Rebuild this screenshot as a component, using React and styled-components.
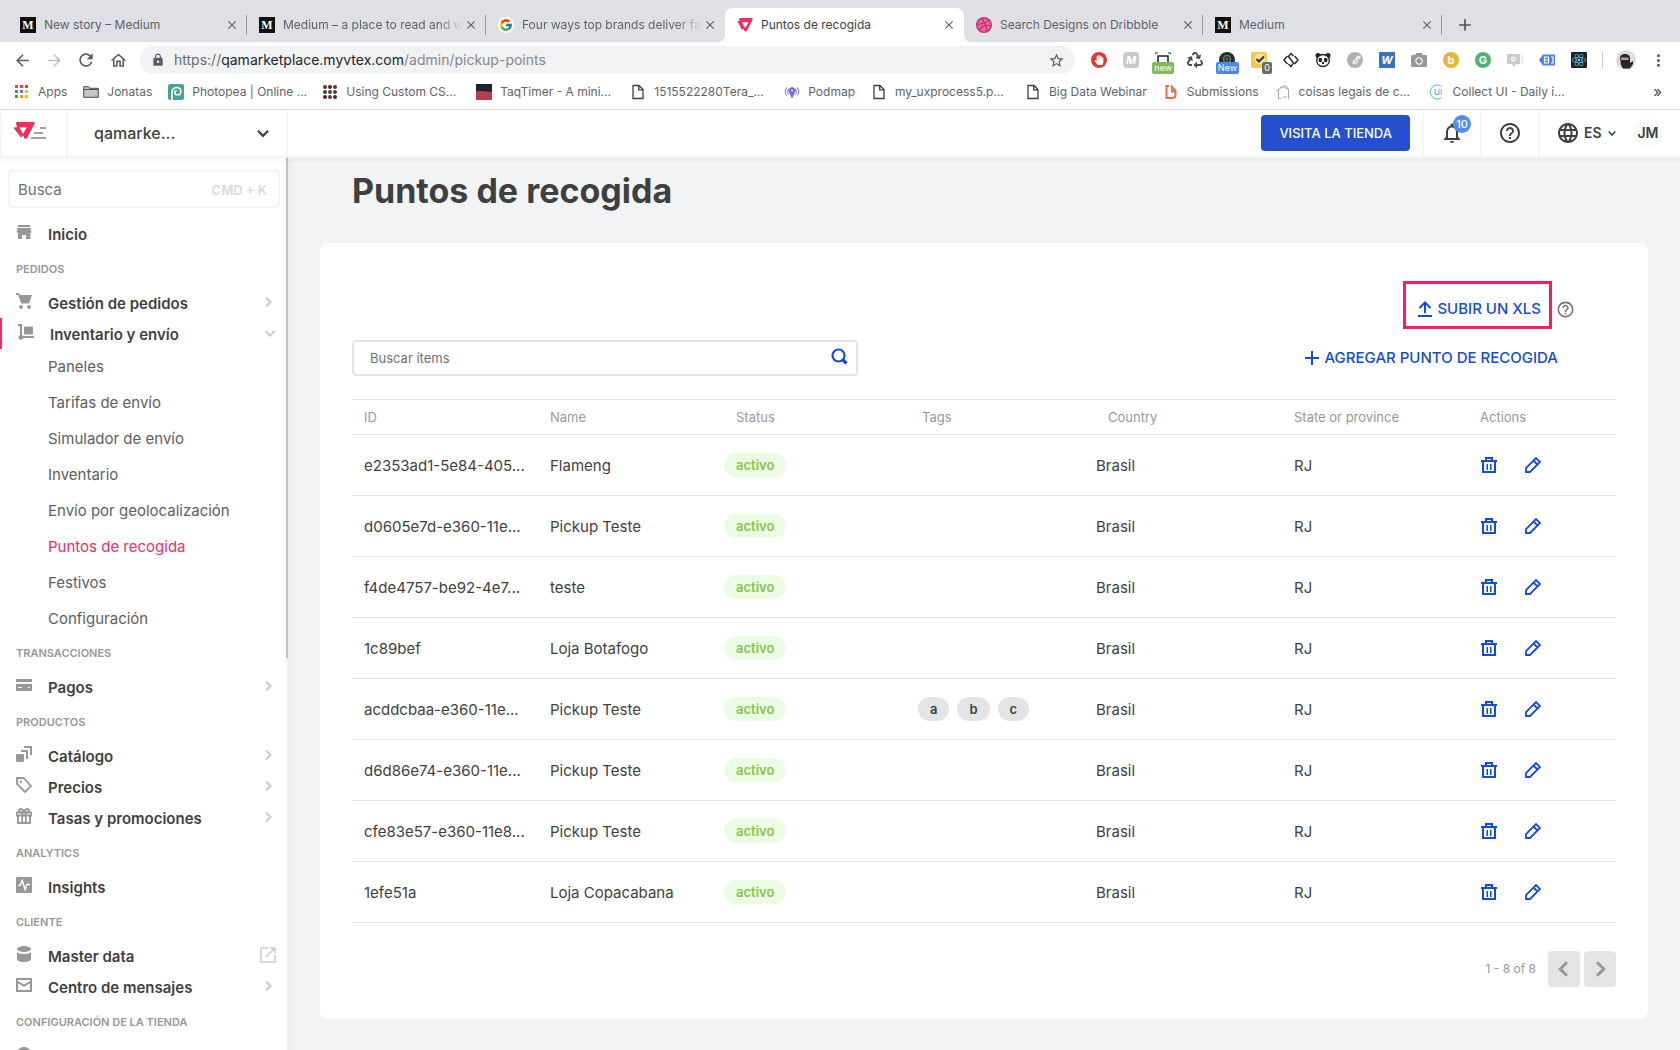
import React from "react";
import styled, { createGlobalStyle, css } from "styled-components";
import {
  MdArrowBack,
  MdArrowForward,
  MdRefresh,
  MdOutlineHome,
  MdLock,
  MdStarBorder,
  MdMoreVert,
  MdNotificationsNone,
  MdHelpOutline,
  MdLanguage,
  MdClose,
  MdAdd,
} from "react-icons/md";
import { FaRecycle, FaHandPaper, FaCamera, FaReact } from "react-icons/fa";
import { FcGoogle } from "react-icons/fc";
import { FaDribbble } from "react-icons/fa6";

const ink = "#3f3f40";
const muted = "#979899";
const blue = "#134cd8";
const pink = "#e9315f";
const line = "#e3e4e6";
const frame = "#f2f4f5";

const GlobalStyle = createGlobalStyle`
  * { box-sizing: border-box; }
  body {
    margin: 0;
    color: ${ink};
    font-family: Inter, "Liberation Sans", sans-serif;
    font-size: 15px;
    line-height: 20px;
  }
  button, input, select { font: inherit; color: inherit; }
  button { padding: 0; border: 0; background: none; cursor: pointer; }
  a { color: inherit; text-decoration: none; }
  svg { display: block; flex: none; }
`;

/* ---------- Browser window ---------- */

const Screen = styled.div`
  display: flex;
  flex-direction: column;
  height: 100vh;
  overflow: hidden;
  background: #fff;
`;

const TabStrip = styled.div`
  display: flex;
  align-items: center;
  flex: none;
  padding: 8px 8px 0;
  background: #dfe0e5;
`;

const Tab = styled.div`
  display: flex;
  align-items: center;
  flex: 0 1 239px;
  min-width: 0;
  height: 34px;
  color: #5f6368;
  font-size: 12px;
  ${(p) =>
    p.$active &&
    css`
      position: relative;
      background: #fff;
      color: #3c4043;
      border-radius: 8px 8px 0 0;
      &::before,
      &::after {
        content: "";
        position: absolute;
        bottom: 0;
        width: 8px;
        height: 8px;
      }
      &::before {
        right: 100%;
        background: radial-gradient(circle at 0 0, transparent 8px, #fff 8px);
      }
      &::after {
        left: 100%;
        background: radial-gradient(circle at 100% 0, transparent 8px, #fff 8px);
      }
    `}
`;

const TabLink = styled.a`
  display: flex;
  align-items: center;
  flex: 1;
  gap: 8px;
  min-width: 0;
  padding-left: 12px;
`;

const TabTitle = styled.span`
  flex: 1;
  overflow: hidden;
  white-space: nowrap;
  ${(p) =>
    p.$fade &&
    css`
      mask-image: linear-gradient(to right, #000 86%, transparent);
    `}
`;

const TabClose = styled.button`
  display: grid;
  place-items: center;
  width: 16px;
  height: 16px;
  margin-right: 6px;
  color: #5f6368;
`;

const TabDivider = styled.span`
  width: 1px;
  height: 20px;
  background: ${(p) => (p.$visible ? "#96999e" : "transparent")};
`;

const NewTab = styled.button`
  display: grid;
  place-items: center;
  width: 28px;
  height: 28px;
  margin-left: 9px;
  color: #505357;
`;

const SerifMark = styled.span`
  display: grid;
  place-items: center;
  flex: none;
  width: 16px;
  height: 16px;
  background: #12100e;
  color: #fff;
  font: 700 12px/16px "Liberation Serif", serif;
`;

const Toolbar = styled.div`
  display: flex;
  align-items: center;
  flex: none;
  padding: 4px 5px 4px 6px;
`;

const ToolButton = styled.button`
  display: grid;
  place-items: center;
  flex: none;
  width: ${(p) => p.$width || 32}px;
  height: 28px;
  color: ${(p) => (p.$dim ? "#bcbec1" : "#5a5d61")};
`;

const Omnibox = styled.label`
  display: flex;
  align-items: center;
  flex: 1;
  min-width: 0;
  height: 28px;
  margin: 0 8px 0 6px;
  padding: 0 10px 0 11px;
  border-radius: 14px;
  background: #f1f2f4;
  color: #5a5d61;
  font-size: 14px;
`;

const Address = styled.span`
  flex: 1;
  padding-left: 9px;
  color: #85888c;
  overflow: hidden;
  white-space: nowrap;
`;

const Scheme = styled.span`
  color: #696c70;
`;

const Host = styled.span`
  color: #25272a;
`;

const ExtIcon = styled.span`
  display: grid;
  place-items: center;
  flex: none;
  position: relative;
  width: 16px;
  height: 16px;
  border-radius: ${(p) => (p.$round ? 8 : p.$corner || 0)}px;
  background: ${(p) => p.$bg || "none"};
  color: ${(p) => p.$fg || "#fff"};
  font: ${(p) => (p.$italic ? "italic " : "")}700 11px/16px Inter, sans-serif;
`;

const ExtBadge = styled.span`
  position: absolute;
  top: 10px;
  right: ${(p) => p.$right}px;
  padding: 0 2px;
  border-radius: 2px;
  background: ${(p) => p.$bg};
  color: #fff;
  font: 400 9px/12px Inter, sans-serif;
`;

const ToolDivider = styled.span`
  width: 1px;
  height: 16px;
  margin: 0 8px 0 7px;
  background: #c8cacd;
`;

const Bookmarks = styled.nav`
  display: flex;
  align-items: center;
  flex: none;
  height: 32px;
  padding: 0 18px 4px 14px;
  border-bottom: 1px solid #d5d7da;
  color: #5f6368;
  font-size: 12px;
`;

const Bookmark = styled.a`
  display: flex;
  align-items: center;
  gap: 8px;
  flex: 0 0 ${(p) => (p.$long ? "154px" : "auto")};
  padding-right: ${(p) => (p.$long ? 0 : 16)}px;
  white-space: nowrap;
`;

const BookmarkIcon = styled.span`
  display: grid;
  place-items: center;
  width: 16px;
  height: 16px;
`;

const More = styled.button`
  margin-left: auto;
  font-size: 15px;
  color: #45484c;
`;

/* ---------- Admin top bar ---------- */

const TopBar = styled.header`
  display: flex;
  flex: none;
  position: relative;
  z-index: 1;
  height: 48px;
  border-bottom: 2px solid ${frame};
  border-left: 2px solid ${frame};
  box-shadow: 0 4px 0 rgba(0, 0, 0, 0.02);
`;

const LogoLink = styled.a`
  padding: 11px 0 0 12px;
  width: 66px;
  border-right: 2px solid ${frame};
`;

const StorePicker = styled.label`
  display: flex;
  align-items: center;
  width: 220px;
  padding: 0 14px 0 26px;
  border-right: 2px solid ${frame};
  font-size: 16px;
  font-weight: 500;
`;

const PlainSelect = styled.select`
  flex: 1;
  padding: 0;
  border: 0;
  background: none;
  appearance: none;
`;

const TopActions = styled.div`
  display: flex;
  align-items: center;
  margin-left: auto;
`;

const VisitButton = styled.a`
  margin-right: 12px;
  padding: 8px 18px;
  border-radius: 4px;
  background: #2450cf;
  color: #fff;
  font-size: 13px;
  font-weight: 500;
`;

const TopCell = styled.button`
  display: grid;
  place-items: center;
  position: relative;
  width: 58px;
  height: 46px;
  border-left: 2px solid ${frame};
`;

const CountBadge = styled.span`
  position: absolute;
  top: 5px;
  left: 29px;
  width: 18px;
  height: 18px;
  border-radius: 9px;
  background: #4f8df2;
  color: #fff;
  font-size: 11px;
  font-weight: 500;
  line-height: 18px;
`;

const LocaleCell = styled.label`
  display: flex;
  align-items: center;
  gap: 4px;
  height: 46px;
  padding-left: 16px;
  border-left: 2px solid ${frame};
  font-size: 14px;
  font-weight: 600;
`;

const Avatar = styled.button`
  width: 28px;
  height: 28px;
  margin: 0 18px 0 16px;
  border-radius: 14px;
  background: #f7f9fa;
  font-size: 14px;
  font-weight: 600;
`;

/* ---------- Sidebar ---------- */

const Body = styled.div`
  display: flex;
  flex: 1;
  min-height: 0;
`;

const Sidebar = styled.aside`
  display: flex;
  flex: none;
  position: relative;
  width: 288px;
  box-shadow: 4px 0 0 rgba(0, 0, 0, 0.02);
`;

const SideNav = styled.nav`
  flex: 1;
  padding-top: 12px;
  overflow: hidden;
`;

const ScrollTrack = styled.div`
  width: 2px;
  background: ${frame};
`;

const ScrollThumb = styled.div`
  height: 56%;
  background: #bfc0c2;
`;

const SideSearch = styled.label`
  display: flex;
  align-items: center;
  height: 38px;
  margin: 0 6px 10px 8px;
  padding: 2px 11px 0 8px;
  border: 2px solid ${frame};
  border-radius: 4px;
`;

const SideInput = styled.input`
  flex: 1;
  min-width: 0;
  padding: 0;
  border: 0;
  outline: 0;
  &::placeholder {
    color: #727273;
    opacity: 1;
  }
`;

const Shortcut = styled.span`
  color: #dcdddf;
  font-size: 13px;
  font-weight: 700;
`;

const SideHeading = styled.h2`
  height: 38px;
  margin: 0;
  padding: 10px 16px 8px;
  color: ${muted};
  font-size: 11px;
  font-weight: 600;
`;

const SideItem = styled.a`
  display: flex;
  align-items: center;
  gap: 16px;
  height: 31px;
  padding: 0 ${(p) => (p.$current ? 8 : 10)}px 0 16px;
  border-left: ${(p) => (p.$current ? `2px solid ${pink}` : "0")};
  font-weight: 600;
  color: ${ink};
  & > svg {
    margin-bottom: 4px;
    color: ${muted};
  }
`;

const SideLabel = styled.span`
  flex: 1;
  padding-top: 2px;
`;

const SideTail = styled.span`
  margin-bottom: 2px;
  color: #cacbcc;
`;

const SubList = styled.ul`
  margin: 0 0 -4px;
  padding: 0;
  list-style: none;
`;

const SubLink = styled.a`
  display: block;
  padding: 8px 16px 8px 48px;
  color: ${(p) => (p.$current ? pink : "#5e5e5f")};
`;

/* ---------- Page ---------- */

const Page = styled.main`
  flex: 1;
  min-width: 0;
  padding: 13px 32px 31px;
  overflow: hidden;
  background: #f2f3f5;
`;

const Title = styled.h1`
  margin: 0 0 32px;
  padding-left: 32px;
  font-size: 34px;
  line-height: 40px;
  font-weight: 700;
`;

const Card = styled.section`
  padding: 38px 32px 32px;
  border-radius: 8px;
  background: #fff;
`;

const UploadRow = styled.div`
  display: flex;
  justify-content: flex-end;
  gap: 4px;
  margin-bottom: 11px;
  padding-right: 41px;
  color: #727273;
  & > svg {
    margin-top: 19px;
  }
`;

const ActionButton = styled.button`
  display: flex;
  align-items: center;
  gap: 5px;
  color: ${blue};
  font-weight: 500;
`;

const Highlight = styled.div`
  display: flex;
  height: 48px;
  padding: 7px 8px 0 12px;
  border: 3px solid #fa1a66;
`;

const FilterRow = styled.div`
  display: flex;
  justify-content: space-between;
  margin-bottom: 23px;
  padding-right: 58px;
`;

const SearchBox = styled.label`
  display: flex;
  align-items: center;
  flex: 0 1 506px;
  height: 36px;
  padding: 0 8px 0 16px;
  border: 2px solid ${line};
  border-radius: 4px;
  & > svg {
    margin-bottom: 4px;
  }
`;

const SearchInput = styled.input`
  flex: 1;
  min-width: 0;
  padding: 0;
  border: 0;
  outline: 0;
  font-size: 13px;
  &::placeholder {
    color: #727273;
    opacity: 1;
  }
`;

const Table = styled.table`
  width: 100%;
  table-layout: fixed;
  border-collapse: separate;
  border-spacing: 0;
`;

const HeadCell = styled.th`
  width: ${(p) => (p.$last ? "auto" : "186px")};
  height: 36px;
  padding: 0 12px;
  border-top: 1px solid ${line};
  border-bottom: 1px solid ${line};
  color: ${muted};
  font-size: 13px;
  font-weight: 400;
  text-align: left;
`;

const Cell = styled.td`
  height: 61px;
  padding: ${(p) => (p.$badge ? 0 : 2)}px ${(p) => (p.$flush ? 0 : 12)}px 0;
  border-bottom: 1px solid ${line};
  overflow: hidden;
  white-space: nowrap;
`;

const Status = styled.span`
  display: inline-block;
  padding: 2px 12px;
  border-radius: 12px;
  background: #eafce3;
  color: #8bc34a;
  font-size: 13px;
  font-weight: 600;
  vertical-align: middle;
`;

const TagList = styled.div`
  display: flex;
  gap: 8px;
  padding-left: 8px;
`;

const Tag = styled.span`
  padding: 2px 12px;
  border-radius: 12px;
  background: ${line};
  font-size: 13px;
  font-weight: 600;
`;

const RowActions = styled.div`
  display: flex;
  gap: 28px;
  padding-left: 1px;
  color: ${blue};
`;

const IconButton = styled.button`
  width: 16px;
  height: 16px;
`;

const Pager = styled.div`
  display: flex;
  align-items: center;
  justify-content: flex-end;
  gap: 4px;
  margin-top: 28px;
`;

const PagerText = styled.span`
  margin-right: 8px;
  color: ${muted};
  font-size: 12px;
`;

const PagerButton = styled.button`
  display: grid;
  place-items: center;
  width: 32px;
  height: 36px;
  border-radius: 4px;
  background: ${line};
  color: ${muted};
`;

/* ---------- Drawings ---------- */

const Svg = ({ w = 16, h = 16, box, ...rest }) => (
  <svg width={w} height={h} viewBox={box || `0 0 ${w} ${h}`} fill="none" aria-hidden="true" {...rest} />
);

const Chevron = ({ dir = "right", size = 16, weight = 2 }) => {
  const d = {
    right: "M6 3.500l4.500 4.500L6 12.500",
    left: "M10 3.500L5.500 8l4.500 4.500",
    down: "M3.500 6L8 10.500 12.500 6",
  }[dir];
  return (
    <Svg w={size} h={size} box="0 0 16 16" stroke="currentColor" strokeWidth={weight}>
      <path d={d} />
    </Svg>
  );
};

const VtexMark = () => (
  <Svg w={16} h={16} fill={pink}>
    <path
      fillRule="evenodd"
      d="M3.200 1h11.300c1 0 1.500 1 1 1.900l-5.800 11c-.5.900-1.700.900-2.200 0L6.200 11.400l-.6 1c-.2.400-.7.400-.9 0L1 5.300c-.3-.6 0-1.200.6-1.200h1.100L2.200 2.900C1.800 2 2.300 1 3.200 1zM5 5.200l3.200 6 3.200-6z"
    />
  </Svg>
);

const BrandLogo = () => (
  <Svg w={34} h={20}>
    <path
      fill={pink}
      fillRule="evenodd"
      d="M3.500 1h16c1 0 1.500 1 1 1.900l-7.600 14.300c-.6 1-2 1-2.500 0L8.800 14.300l-1 1.800c-.3.500-.9.500-1.200 0L.2 7.800C-.2 7 .2 6.200 1 6.200h2.200L2.100 3C1.700 2 2.300 1 3.500 1zM5.400 6.400L9 13l3.600-6.600z"
    />
    <path stroke="#9fa1a3" strokeWidth="2" d="M26 7h6M23 12h4M17 17h15M20 12h9" />
  </Svg>
);

const sideIcons = {
  store: <path fill="currentColor" d="M2 1h12v2H2zM1.500 4h13l1 4.500h-1V15H10v-4H6v4H2V8.500H.5z" />,
  cart: (
    <g fill="currentColor">
      <path d="M0 0h3.200l.8 2H16l-2.600 7.500c-.2.600-.7 1-1.300 1H5.200L2.200 2H0z" />
      <circle cx="5" cy="14" r="1.900" />
      <circle cx="13" cy="14" r="1.900" />
    </g>
  ),
  dolly: (
    <g fill="currentColor">
      <path d="M0 0h4v12h12v2H4V14H2V2H0z" />
      <rect x="6" y="2.500" width="9" height="8" rx=".8" />
      <circle cx="3" cy="13.300" r="2.500" />
    </g>
  ),
  card: (
    <path
      fill="currentColor"
      fillRule="evenodd"
      d="M1 2h14c.6 0 1 .4 1 1v2H0V3c0-.6.400-1 1-1zM0 7h16v6c0 .6-.4 1-1 1H1c-.6 0-1-.4-1-1zm2 3v1h4v-1zm10 0v1h2v-1z"
    />
  ),
  catalog: (
    <g>
      <rect y="8" width="8" height="8" rx="1" fill="currentColor" />
      <path stroke="currentColor" strokeWidth="2" d="M5 5h6v8M8 1h7v8" />
    </g>
  ),
  tag: (
    <g>
      <path stroke="currentColor" strokeWidth="1.800" d="M1 1h6.500L15 9l-6 6-8-8z" />
      <circle cx="4.800" cy="4.800" r="1.200" fill="currentColor" />
    </g>
  ),
  gift: (
    <path
      stroke="currentColor"
      strokeWidth="1.800"
      d="M1 4.500h14v3H1zM2 7.500V15h12V7.500M6.200 4.500V15M9.800 4.500V15M8 4C7 .5 3 0 3 2.500 3 4 5 4.300 8 4.300S13 4 13 2.500C13 0 9 .500 8 4z"
    />
  ),
  pulse: (
    <g>
      <rect width="16" height="16" rx="1" fill="currentColor" />
      <path stroke="#fff" strokeWidth="1.500" d="M2 8.500h2l2.200-5 3 9L11 7.500h3" />
    </g>
  ),
  database: (
    <g fill="currentColor">
      <ellipse cx="8" cy="3" rx="7" ry="3" />
      <path d="M1 6.300C3 8.400 13 8.400 15 6.300V13c0 1.700-3 3-7 3s-7-1.300-7-3z" />
    </g>
  ),
  mail: <path stroke="currentColor" strokeWidth="2" d="M1 2h14v12H1zM2 5l6 3.800L14 5" />,
  gear: <path fill="currentColor" d="M6.500 1h3L14 3.500l2 3v5l-2 4H2l-2-4v-5l2-3z" />,
};

const SideIcon = ({ name }) => <Svg>{sideIcons[name]}</Svg>;

const External = () => (
  <Svg stroke="currentColor" strokeWidth="1.500">
    <path d="M8 1H1v14h14V8M10 1h5v5M14.500 1.500l-8.500 8.500" />
  </Svg>
);

const Trash = () => (
  <Svg stroke="currentColor" strokeWidth="2">
    <path d="M0 4h16M5 4V1h6v3M2 4v11h12V4" />
    <path strokeWidth="1.500" d="M6.250 7v6M9.750 7v6" />
  </Svg>
);

const Pencil = () => (
  <Svg stroke="currentColor" strokeWidth="1.800">
    <path d="M1 15v-4L11 1l4 4L5 15zM8.500 3.500l4 4" />
  </Svg>
);

const Magnifier = () => (
  <Svg w={17} h={17} stroke={blue}>
    <circle cx="7.500" cy="7.500" r="6" strokeWidth="2.200" />
    <path d="M11.500 11.500l4 4" strokeWidth="3.200" />
  </Svg>
);

const Upload = () => (
  <Svg w={14} h={16} stroke="currentColor" strokeWidth="2">
    <path d="M0 15h14M7 12V1.500M1.500 7L7 1.500 12.500 7" />
  </Svg>
);

const Plus = () => (
  <Svg w={14} h={14} stroke="currentColor" strokeWidth="2">
    <path d="M7 0v14M0 7h14" />
  </Svg>
);

const FileIcon = ({ color = "#3c3f43" }) => (
  <Svg stroke={color} strokeWidth="1.300">
    <path d="M3 1.500h6l4 4V14.500H3zM8.700 1.500v4.300H13" />
  </Svg>
);

const Dots = ({ colors, round }) => (
  <Svg>
    {colors.map((c, i) => (
      <rect
        key={i}
        x={1 + (i % 3) * 5}
        y={1 + Math.floor(i / 3) * 5}
        width={round ? 4 : 3}
        height={round ? 4 : 3}
        rx={round ? 2 : 0}
        fill={c}
      />
    ))}
  </Svg>
);

const bookmarkIcons = {
  apps: (
    <Dots
      colors={["#ea4335", "#ea4335", "#ea4335", "#34a853", "#4285f4", "#fbbc05", "#34a853", "#f29900", "#fbbc05"]}
    />
  ),
  folder: (
    <Svg>
      <path d="M.7 13.300V2.700h4.800l1.200 1.600h8.600v9z" fill="#c4c5c7" stroke="#4a4d51" />
      <path d="M1 5.500h14" stroke="#4a4d51" />
    </Svg>
  ),
  photopea: (
    <Svg>
      <rect width="16" height="16" rx="2" fill="#45a497" />
      <path
        d="M4 16V8.500C4 5.500 6 3.500 8.600 3.500c2.400 0 4.200 1.600 4.200 3.900 0 2-1.500 3.400-3.400 3.400-1.500 0-2.600-1-2.600-2.300 0-1.100.8-1.900 1.800-1.900"
        stroke="#fff"
        strokeWidth="1.600"
      />
    </Svg>
  ),
  custom: (
    <Dots
      round
      colors={["#4b4038", "#7d1010", "#4b4038", "#4b4038", "#4b4038", "#4b4038", "#7d1010", "#4b4038", "#7d1010"]}
    />
  ),
  timer: (
    <Svg>
      <path fill="#b53e50" d="M0 6h16v10H0z" />
      <path fill="#1d2230" d="M0 0h16v7.500C11 8.500 5 6 0 7.500z" />
    </Svg>
  ),
  file: <FileIcon />,
  podmap: (
    <Svg stroke="#7b61e8">
      <path d="M2.500 3.500c-1.700 2.500-1.700 5.500 0 8M4.500 4.500c-1 2-1 4 0 6M13.500 3.500c1.700 2.500 1.700 5.500 0 8M11.500 4.500c1 2 1 4 0 6" />
      <path fill="#7b61e8" d="M8 13.500L5.500 8a2.900 2.900 0 1 1 5 0z" />
      <circle cx="8" cy="6.500" r="1" fill="#fff" stroke="none" />
    </Svg>
  ),
  submit: (
    <Svg stroke="#ef6a45" strokeWidth="2">
      <path d="M6 2H3.500v12h6c2 0 3-1.200 3-3V7L9 3v4.500h3" />
    </Svg>
  ),
  box: (
    <Svg stroke="#a5a7aa">
      <path d="M3.500 15V5.500L8 2.500l5.500 3V15M3.500 5.500L1.500 7M5 3.500l6-2 2.500 4M3.500 14.500h3M8 13h4" />
    </Svg>
  ),
  collect: (
    <Svg>
      <path d="M12.500 2.500A7 7 0 1 0 12.500 13.500" stroke="#4db6e6" />
      <text x="5" y="11" fontSize="8" fontFamily="Inter, sans-serif" fill="#2f9fd8">
        UI
      </text>
    </Svg>
  ),
};

const tabIcons = {
  medium: <SerifMark>M</SerifMark>,
  google: (
    <ExtIcon $round $bg="#fff">
      <FcGoogle size={14} />
    </ExtIcon>
  ),
  vtex: <VtexMark />,
  dribbble: (
    <ExtIcon $round $bg="#e8659b" $fg="#b8326a">
      <FaDribbble size={16} />
    </ExtIcon>
  ),
};

/* ---------- Data ---------- */

const tabs = [
  { icon: "medium", title: "New story – Medium", divider: true },
  { icon: "medium", title: "Medium – a place to read and w", divider: true, fade: true },
  { icon: "google", title: "Four ways top brands deliver fa", fade: true },
  { icon: "vtex", title: "Puntos de recogida", active: true },
  { icon: "dribbble", title: "Search Designs on Dribbble", divider: true },
  { icon: "medium", title: "Medium", divider: true },
];

const bookmarks = [
  { icon: "apps", title: "Apps" },
  { icon: "folder", title: "Jonatas" },
  { icon: "photopea", title: "Photopea | Online ...", long: true },
  { icon: "custom", title: "Using Custom CS...", long: true },
  { icon: "timer", title: "TaqTimer - A mini...", long: true },
  { icon: "file", title: "1515522280Tera_...", long: true },
  { icon: "podmap", title: "Podmap" },
  { icon: "file", title: "my_uxprocess5.p...", long: true },
  { icon: "file", title: "Big Data Webinar" },
  { icon: "submit", title: "Submissions" },
  { icon: "box", title: "coisas legais de c...", long: true },
  { icon: "collect", title: "Collect UI - Daily i..." },
];

const extensions = [
  ["Bloqueador", <ExtIcon $round $bg="#dd3b2f"><FaHandPaper size={10} /></ExtIcon>],
  ["Notas", <ExtIcon $italic $corner={4} $bg="#c9c9c9">M</ExtIcon>],
  [
    "Captura",
    <ExtIcon>
      <Svg stroke="#222" strokeWidth="1.500">
        <path d="M3 10V4h10v6" />
        <path d="M0 3V1h3M13 1h3v2" stroke="#4a9a3a" />
      </Svg>
      <ExtBadge $bg="#7fba5c" $right={-3}>new</ExtBadge>
    </ExtIcon>,
  ],
  ["Reciclar", <FaRecycle size={16} color="#4a4d51" />],
  [
    "Cámara",
    <ExtIcon>
      <Svg>
        <circle cx="8" cy="8" r="8" fill="#26282b" />
        <circle cx="8" cy="7" r="3.500" stroke="#3f8f7a" strokeWidth="1.500" />
        <circle cx="8" cy="7" r="1.500" fill="#b8433c" />
      </Svg>
      <ExtBadge $bg="#4a86ee" $right={-4}>New</ExtBadge>
    </ExtIcon>,
  ],
  [
    "Tareas",
    <ExtIcon $corner={2} $bg="#f3c64c">
      <Svg>
        <circle cx="9" cy="7" r="5.500" fill="#f7e3a0" />
        <path d="M5.500 7l2.500 2.500 5-5" stroke="#333" strokeWidth="2" />
      </Svg>
      <ExtBadge $bg="#6b6b6b" $right={-5}>0</ExtBadge>
    </ExtIcon>,
  ],
  [
    "Sketch",
    <Svg stroke="#2b2b2b" strokeWidth="1.500">
      <path d="M4.500 4L.9 8l3.600 4M11.500 4l3.600 4-3.600 4M10.500 4L8 1.500 5.500 4.500l5 6.500L8 14.500 5.500 12" />
    </Svg>,
  ],
  [
    "Panda",
    <Svg>
      <circle cx="3" cy="3.500" r="2.500" fill="#222" />
      <circle cx="13" cy="3.500" r="2.500" fill="#222" />
      <ellipse cx="8" cy="8.500" rx="6.300" ry="6" fill="#fff" stroke="#222" strokeWidth="1.300" />
      <ellipse cx="5.300" cy="8" rx="1.800" ry="2.200" fill="#222" />
      <ellipse cx="10.700" cy="8" rx="1.800" ry="2.200" fill="#222" />
      <circle cx="8" cy="11" r="1.200" fill="#222" />
    </Svg>,
  ],
  ["Evernote", <ExtIcon $round $italic $bg="#b0b0b0">ℰ</ExtIcon>],
  ["Word", <ExtIcon $italic $bg="#3a73b8">W</ExtIcon>],
  ["Foto", <FaCamera size={16} color="#98999b" />],
  ["Bitly", <ExtIcon $round $bg="#eeb23c">b</ExtIcon>],
  ["Gramática", <ExtIcon $round $bg="#4cb277">G</ExtIcon>],
  [
    "Chat",
    <Svg>
      <path d="M15 2v10" stroke="#dadada" />
      <path d="M0 2h13v10H9l-2.500 3L5 12H0z" fill="#cbcbcb" />
      <circle cx="6.500" cy="7" r="1.800" stroke="#fff" strokeWidth="1.200" />
    </Svg>,
  ],
  [
    "Etiquetas",
    <Svg>
      <path d="M0 8l4-5.500h12v11H4z" fill="#4a7df0" />
      <path d="M5.500 5h4v6h-4zM5.500 8h4M12 5h2v6h-2" stroke="#fff" strokeWidth="1.200" />
    </Svg>,
  ],
  ["React", <ExtIcon $corner={1} $bg="#1e2127" $fg="#61c9e8"><FaReact size={14} /></ExtIcon>],
];

const sideSections = [
  { items: [{ icon: "store", label: "Inicio" }] },
  {
    heading: "PEDIDOS",
    items: [
      { icon: "cart", label: "Gestión de pedidos", tail: "right" },
      {
        icon: "dolly",
        label: "Inventario y envío",
        tail: "down",
        children: [
          "Paneles",
          "Tarifas de envío",
          "Simulador de envío",
          "Inventario",
          "Envío por geolocalización",
          "Puntos de recogida",
          "Festivos",
          "Configuración",
        ],
      },
    ],
  },
  { heading: "TRANSACCIONES", items: [{ icon: "card", label: "Pagos", tail: "right" }] },
  {
    heading: "PRODUCTOS",
    items: [
      { icon: "catalog", label: "Catálogo", tail: "right" },
      { icon: "tag", label: "Precios", tail: "right" },
      { icon: "gift", label: "Tasas y promociones", tail: "right" },
    ],
  },
  { heading: "ANALYTICS", items: [{ icon: "pulse", label: "Insights" }] },
  {
    heading: "CLIENTE",
    items: [
      { icon: "database", label: "Master data", tail: "external" },
      { icon: "mail", label: "Centro de mensajes", tail: "right" },
    ],
  },
  { heading: "CONFIGURACIÓN DE LA TIENDA", items: [{ icon: "gear", label: "" }] },
];

const columns = ["ID", "Name", "Status", "Tags", "Country", "State or province", "Actions"];

const rows = [
  ["e2353ad1-5e84-405...", "Flameng", []],
  ["d0605e7d-e360-11e...", "Pickup Teste", []],
  ["f4de4757-be92-4e7...", "teste", []],
  ["1c89bef", "Loja Botafogo", []],
  ["acddcbaa-e360-11e...", "Pickup Teste", ["a", "b", "c"]],
  ["d6d86e74-e360-11e...", "Pickup Teste", []],
  ["cfe83e57-e360-11e8...", "Pickup Teste", []],
  ["1efe51a", "Loja Copacabana", []],
];

/* ---------- Sections ---------- */

function BrowserChrome() {
  return (
    <>
      <TabStrip>
        {tabs.map((t, i) => (
          <Tab key={i} $active={t.active}>
            <TabLink href="#">
              {tabIcons[t.icon]}
              <TabTitle $fade={t.fade}>{t.title}</TabTitle>
            </TabLink>
            <TabClose aria-label="Cerrar pestaña">
              <MdClose size={14} />
            </TabClose>
            <TabDivider $visible={t.divider} />
          </Tab>
        ))}
        <NewTab aria-label="Nueva pestaña">
          <MdAdd size={20} />
        </NewTab>
      </TabStrip>
      <Toolbar>
        <ToolButton aria-label="Atrás"><MdArrowBack size={19} /></ToolButton>
        <ToolButton aria-label="Adelante" $dim><MdArrowForward size={19} /></ToolButton>
        <ToolButton aria-label="Recargar"><MdRefresh size={20} /></ToolButton>
        <ToolButton aria-label="Inicio"><MdOutlineHome size={19} /></ToolButton>
        <Omnibox>
          <MdLock size={14} />
          <Address>
            <Scheme>https://</Scheme>
            <Host>qamarketplace.myvtex.com</Host>/admin/pickup-points
          </Address>
          <MdStarBorder size={17} />
        </Omnibox>
        {extensions.map(([name, icon]) => (
          <ToolButton key={name} aria-label={name}>{icon}</ToolButton>
        ))}
        <ToolDivider />
        <ToolButton aria-label="Perfil" $width={30}>
          <Svg w={20} h={20}>
            <circle cx="10" cy="10" r="10" fill="#dcdcdd" />
            <path d="M4 8c0-3 2.500-4 5-4s5 1 5 4v5l3-2v3l-3 4.500H7L5 15z" fill="#26262a" />
            <path d="M5 7.500h7.500V10H5z" fill="#c69a78" />
          </Svg>
        </ToolButton>
        <ToolButton aria-label="Menú" $width={34}><MdMoreVert size={19} /></ToolButton>
      </Toolbar>
      <Bookmarks>
        {bookmarks.map((b) => (
          <Bookmark key={b.title} href="#" $long={b.long}>
            <BookmarkIcon>{bookmarkIcons[b.icon]}</BookmarkIcon>
            {b.title}
          </Bookmark>
        ))}
        <More>»</More>
      </Bookmarks>
    </>
  );
}

function Header() {
  return (
    <TopBar>
      <LogoLink href="#" aria-label="VTEX"><BrandLogo /></LogoLink>
      <StorePicker>
        <PlainSelect aria-label="Tienda">
          <option>qamarke...</option>
        </PlainSelect>
        <Chevron dir="down" size={18} weight={2} />
      </StorePicker>
      <TopActions>
        <VisitButton href="#">VISITA LA TIENDA</VisitButton>
        <TopCell aria-label="Notificaciones">
          <MdNotificationsNone size={24} />
          <CountBadge>10</CountBadge>
        </TopCell>
        <TopCell aria-label="Ayuda"><MdHelpOutline size={24} /></TopCell>
        <LocaleCell>
          <MdLanguage size={24} />
          <PlainSelect aria-label="Idioma">
            <option>ES</option>
          </PlainSelect>
          <Chevron dir="down" size={12} weight={2} />
        </LocaleCell>
        <Avatar>JM</Avatar>
      </TopActions>
    </TopBar>
  );
}

function Tail({ kind }) {
  if (!kind) return null;
  return <SideTail>{kind === "external" ? <External /> : <Chevron dir={kind} />}</SideTail>;
}

function Menu() {
  return (
    <Sidebar>
      <SideNav>
        <SideSearch>
          <SideInput placeholder="Busca" aria-label="Busca" />
          <Shortcut>CMD + K</Shortcut>
        </SideSearch>
        {sideSections.map((s, i) => (
          <React.Fragment key={i}>
            {s.heading && <SideHeading>{s.heading}</SideHeading>}
            {s.items.map((item) => (
              <React.Fragment key={item.icon}>
                <SideItem href="#" $current={!!item.children}>
                  <SideIcon name={item.icon} />
                  <SideLabel>{item.label}</SideLabel>
                  <Tail kind={item.tail} />
                </SideItem>
                {item.children && (
                  <SubList>
                    {item.children.map((c) => (
                      <li key={c}>
                        <SubLink href="#" $current={c === "Puntos de recogida"}>{c}</SubLink>
                      </li>
                    ))}
                  </SubList>
                )}
              </React.Fragment>
            ))}
          </React.Fragment>
        ))}
      </SideNav>
      <ScrollTrack>
        <ScrollThumb />
      </ScrollTrack>
    </Sidebar>
  );
}

function PickupPoints() {
  return (
    <Page>
      <Title>Puntos de recogida</Title>
      <Card>
        <UploadRow>
          <Highlight>
            <ActionButton><Upload />SUBIR UN XLS</ActionButton>
          </Highlight>
          <MdHelpOutline size={19} />
        </UploadRow>
        <FilterRow>
          <SearchBox>
            <SearchInput placeholder="Buscar ítems" aria-label="Buscar ítems" />
            <Magnifier />
          </SearchBox>
          <ActionButton><Plus />AGREGAR PUNTO DE RECOGIDA</ActionButton>
        </FilterRow>
        <Table>
          <thead>
            <tr>
              {columns.map((c) => (
                <HeadCell key={c} $last={c === "Actions"}>{c}</HeadCell>
              ))}
            </tr>
          </thead>
          <tbody>
            {rows.map(([id, name, tags]) => (
              <tr key={id}>
                <Cell>{id}</Cell>
                <Cell>{name}</Cell>
                <Cell $flush $badge><Status>activo</Status></Cell>
                <Cell $flush $badge>
                  <TagList>{tags.map((t) => <Tag key={t}>{t}</Tag>)}</TagList>
                </Cell>
                <Cell $flush>Brasil</Cell>
                <Cell>RJ</Cell>
                <Cell $badge>
                  <RowActions>
                    <IconButton aria-label="Eliminar"><Trash /></IconButton>
                    <IconButton aria-label="Editar"><Pencil /></IconButton>
                  </RowActions>
                </Cell>
              </tr>
            ))}
          </tbody>
        </Table>
        <Pager>
          <PagerText>1 - 8 of 8</PagerText>
          <PagerButton aria-label="Anterior"><Chevron dir="left" size={24} /></PagerButton>
          <PagerButton aria-label="Siguiente"><Chevron size={24} /></PagerButton>
        </Pager>
      </Card>
    </Page>
  );
}

export default function App() {
  return (
    <>
      <GlobalStyle />
      <Screen>
        <BrowserChrome />
        <Header />
        <Body>
          <Menu />
          <PickupPoints />
        </Body>
      </Screen>
    </>
  );
}
